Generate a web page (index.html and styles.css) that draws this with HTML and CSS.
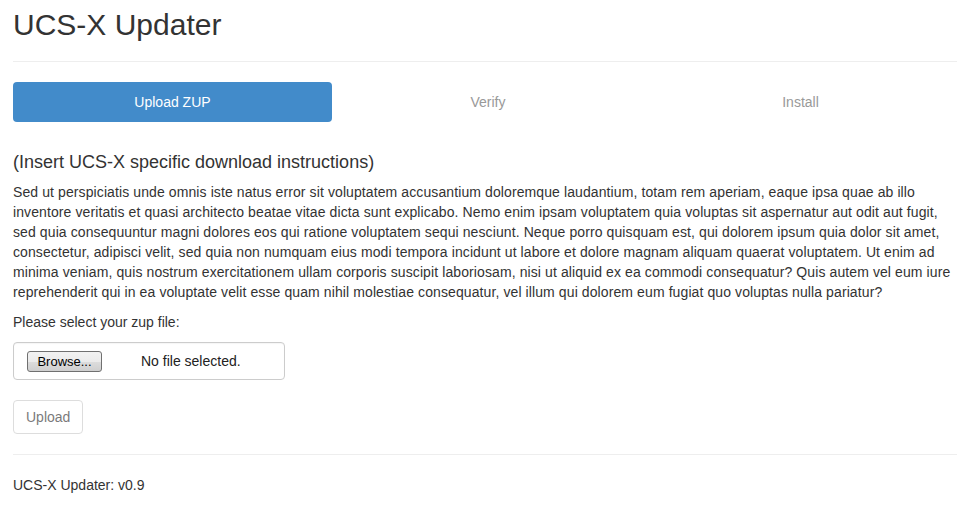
FILE: index.html
```html
<!DOCTYPE html>
<html>
<head>
<meta charset="utf-8">
<title>UCS-X Updater</title>
<link rel="stylesheet" href="styles.css">
</head>
<body>
<div class="container">
  <div class="page-header">
    <h1>UCS-X Updater</h1>
  </div>
  <ul class="steps">
    <li class="step active">Upload ZUP</li>
    <li class="step">Verify</li>
    <li class="step">Install</li>
  </ul>
  <div class="tab-content">
    <h4>(Insert UCS-X specific download instructions)</h4>
    <p>Sed ut perspiciatis unde omnis iste natus error sit voluptatem accusantium doloremque laudantium, totam rem aperiam, eaque ipsa quae ab illo inventore veritatis et quasi architecto beatae vitae dicta sunt explicabo. Nemo enim ipsam voluptatem quia voluptas sit aspernatur aut odit aut fugit, sed quia consequuntur magni dolores eos qui ratione voluptatem sequi nesciunt. Neque porro quisquam est, qui dolorem ipsum quia dolor sit amet, consectetur, adipisci velit, sed quia non numquam eius modi tempora incidunt ut labore et dolore magnam aliquam quaerat voluptatem. Ut enim ad minima veniam, quis nostrum exercitationem ullam corporis suscipit laboriosam, nisi ut aliquid ex ea commodi consequatur? Quis autem vel eum iure reprehenderit qui in ea voluptate velit esse quam nihil molestiae consequatur, vel illum qui dolorem eum fugiat quo voluptas nulla pariatur?</p>
    <label class="file-label">Please select your zup file:</label>
    <div class="file-box">
      <span class="browse">Browse...</span>
      <span class="file-name">No file selected.</span>
    </div>
    <div class="actions">
      <button class="btn" disabled>Upload</button>
    </div>
  </div>
  <hr class="divider">
  <footer class="footer">UCS-X Updater: v0.9</footer>
</div>
</body>
</html>
```
FILE: styles.css
```css
* { box-sizing: border-box; }
body {
  margin: 0;
  font-family: "Liberation Sans", Arial, sans-serif;
  font-size: 14px;
  line-height: 20px;
  color: #333;
  background: #fff;
}
.container {
  padding: 0 13px;
}
.page-header {
  padding-bottom: 10px;
  border-bottom: 1px solid #eee;
  margin-bottom: 20px;
}
.page-header h1 {
  margin: 8px 0 10px;
  font-size: 30px;
  line-height: 33px;
  font-weight: 500;
}
.steps {
  list-style: none;
  margin: 0 0 30px;
  padding: 0;
  display: grid;
  grid-template-columns: 319fr 312fr 313fr;
}
.step {
  height: 40px;
  padding: 10px 15px;
  text-align: center;
  color: #999;
  border-radius: 4px;
}
.step.active {
  background: #428bca;
  color: #fff;
}
.tab-content h4 {
  margin: 10px 0 10px;
  font-size: 18px;
  line-height: 20px;
  font-weight: 500;
}
.tab-content p {
  margin: 0 0 10px;
  letter-spacing: 0.1px;
}
.file-label {
  display: block;
  margin-bottom: 10px;
  font-weight: normal;
}
.file-box {
  width: 272px;
  height: 38px;
  border: 1px solid #ccc;
  border-radius: 4px;
  padding: 7px 13px;
  display: flex;
  align-items: center;
  box-shadow: inset 0 1px 1px rgba(0,0,0,0.04);
}
.browse {
  display: inline-block;
  width: 75px;
  height: 21px;
  font-size: 13px;
  line-height: 19px;
  text-align: center;
  color: #000;
  border: 1px solid #707070;
  border-radius: 3px;
  background: linear-gradient(#f2f2f2, #ebebeb 50%, #dddddd 51%, #cfcfcf);
}
.file-name {
  margin-left: 39px;
  color: #222;
}
.actions {
  margin-top: 20px;
}
.btn {
  font-family: inherit;
  font-size: 14px;
  line-height: 20px;
  height: 34px;
  padding: 6px 12px;
  background: #fff;
  color: #333;
  border: 1px solid #ccc;
  border-radius: 4px;
  opacity: 0.65;
}
.divider {
  margin: 20px 0 20px;
  border: 0;
  border-top: 1px solid #eee;
}
.footer {
  line-height: 20px;
}
```
